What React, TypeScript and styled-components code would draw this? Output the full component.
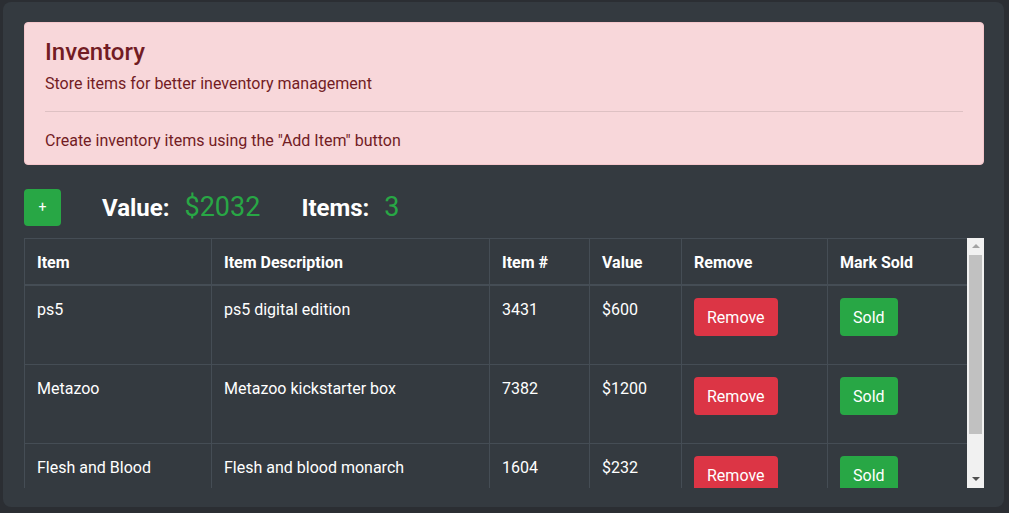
import React from "react";
import styled, { createGlobalStyle } from "styled-components";

const GlobalStyle = createGlobalStyle`
  html, body {
    margin: 0;
    padding: 0;
    background: #2b2e33;
  }
  body {
    font-family: Roboto, "Segoe UI", "Liberation Sans", sans-serif;
    font-size: 16px;
    line-height: 1.5;
    color: #fff;
  }
  * { box-sizing: border-box; }
`;

const Page = styled.div`
  padding: 2px 5px 6px 3px;
`;

const Card = styled.div`
  background: #343a40;
  border-radius: 8px;
  padding: 20px 20px 19px 21px;
`;

const Alert = styled.div`
  background: #f8d7da;
  border: 1px solid #f5c6cb;
  color: #721c24;
  border-radius: 4px;
  padding: 12px 20px 11px;
`;

const AlertHeading = styled.h4`
  margin: 0 0 5px;
  padding-top: 3px;
  font-size: 24px;
  font-weight: 500;
  line-height: 28.8px;
`;

const AlertText = styled.p`
  margin: 0;
  line-height: 24px;
`;

const Divider = styled.hr`
  margin: 15px 0 17px;
  border: 0;
  border-top: 1px solid rgba(0, 0, 0, 0.1);
`;

const Toolbar = styled.div`
  display: flex;
  align-items: center;
  margin-top: 24px;
  height: 37px;
`;

const AddButton = styled.button`
  width: 37px;
  height: 37px;
  border: 0;
  border-radius: 4px;
  background: #28a745;
  color: #fff;
  font-family: inherit;
  font-size: 14px;
  line-height: 1;
  padding: 0;
  margin-right: 41px;
  cursor: pointer;
`;

const Stat = styled.div`
  display: flex;
  align-items: baseline;
  margin-right: 41px;
`;

const StatLabel = styled.span`
  font-size: 24px;
  font-weight: 700;
  color: #fff;
  margin-right: 15px;
`;

const StatValue = styled.span`
  font-size: 27px;
  font-weight: 400;
  color: #28a745;
`;

const TableFrame = styled.div`
  margin-top: 12px;
  height: 250px;
  display: flex;
`;

const Viewport = styled.div`
  flex: 1;
  min-width: 0;
  overflow: hidden;
`;

const ScrollBar = styled.div`
  width: 17px;
  flex: none;
  background: #f1f1f1;
  display: flex;
  flex-direction: column;
`;

const ScrollArrow = styled.div`
  height: 17px;
  flex: none;
  display: flex;
  align-items: center;
  justify-content: center;
`;

const ScrollTrack = styled.div`
  flex: 1;
  padding: 0 2px;
`;

const ScrollThumb = styled.div`
  height: 179px;
  background: #c1c1c1;
`;

const Table = styled.table`
  width: 100%;
  table-layout: fixed;
  border-collapse: collapse;
  margin-bottom: 16px;
  background: #343a40;
  color: #fff;
  border: 1px solid #454d55;
`;

const HeadCell = styled.th`
  text-align: left;
  font-weight: 700;
  padding: 13px 12px 11px;
  line-height: 21px;
  border: 1px solid #454d55;
  border-bottom-width: 2px;
  vertical-align: bottom;
`;

const Cell = styled.td`
  padding: 12px;
  line-height: 24px;
  border: 1px solid #454d55;
  vertical-align: top;
`;

const ActionButton = styled.button<{ $variant: "danger" | "success" }>`
  display: inline-block;
  vertical-align: top;
  margin-bottom: 16px;
  border: 0;
  border-radius: 4px;
  padding: 8px 13px 6px;
  font-family: inherit;
  font-size: 16px;
  line-height: 24px;
  color: #fff;
  background: ${(p) => (p.$variant === "danger" ? "#dc3545" : "#28a745")};
  cursor: pointer;
`;

const columns = [
  { label: "Item", width: 187 },
  { label: "Item Description", width: 278 },
  { label: "Item #", width: 100 },
  { label: "Value", width: 92 },
  { label: "Remove", width: 146 },
  { label: "Mark Sold", width: 140 },
];

const items = [
  { name: "ps5", desc: "ps5 digital edition", num: "3431", value: "$600" },
  { name: "Metazoo", desc: "Metazoo kickstarter box", num: "7382", value: "$1200" },
  { name: "Flesh and Blood", desc: "Flesh and blood monarch", num: "1604", value: "$232" },
];

function Arrow({ up, color }: { up?: boolean; color: string }) {
  return (
    <svg width="8" height="4" viewBox="0 0 8 4">
      <polygon points={up ? "0,4 8,4 4,0" : "0,0 8,0 4,4"} fill={color} />
    </svg>
  );
}

export default function App() {
  return (
    <>
      <GlobalStyle />
      <Page>
        <Card>
          <Alert>
            <AlertHeading>Inventory</AlertHeading>
            <AlertText>Store items for better ineventory management</AlertText>
            <Divider />
            <AlertText>Create inventory items using the "Add Item" button</AlertText>
          </Alert>
          <Toolbar>
            <AddButton>+</AddButton>
            <Stat>
              <StatLabel>Value:</StatLabel>
              <StatValue>$2032</StatValue>
            </Stat>
            <Stat>
              <StatLabel>Items:</StatLabel>
              <StatValue>3</StatValue>
            </Stat>
          </Toolbar>
          <TableFrame>
            <Viewport>
              <Table>
                <colgroup>
                  {columns.map((c) => (
                    <col key={c.label} style={{ width: c.width }} />
                  ))}
                </colgroup>
                <thead>
                  <tr>
                    {columns.map((c) => (
                      <HeadCell key={c.label}>{c.label}</HeadCell>
                    ))}
                  </tr>
                </thead>
                <tbody>
                  {items.map((it) => (
                    <tr key={it.num}>
                      <Cell>{it.name}</Cell>
                      <Cell>{it.desc}</Cell>
                      <Cell>{it.num}</Cell>
                      <Cell>{it.value}</Cell>
                      <Cell>
                        <ActionButton $variant="danger">Remove</ActionButton>
                      </Cell>
                      <Cell>
                        <ActionButton $variant="success">Sold</ActionButton>
                      </Cell>
                    </tr>
                  ))}
                </tbody>
              </Table>
            </Viewport>
            <ScrollBar>
              <ScrollArrow>
                <Arrow up color="#a3a3a3" />
              </ScrollArrow>
              <ScrollTrack>
                <ScrollThumb />
              </ScrollTrack>
              <ScrollArrow>
                <Arrow color="#505050" />
              </ScrollArrow>
            </ScrollBar>
          </TableFrame>
        </Card>
      </Page>
    </>
  );
}
